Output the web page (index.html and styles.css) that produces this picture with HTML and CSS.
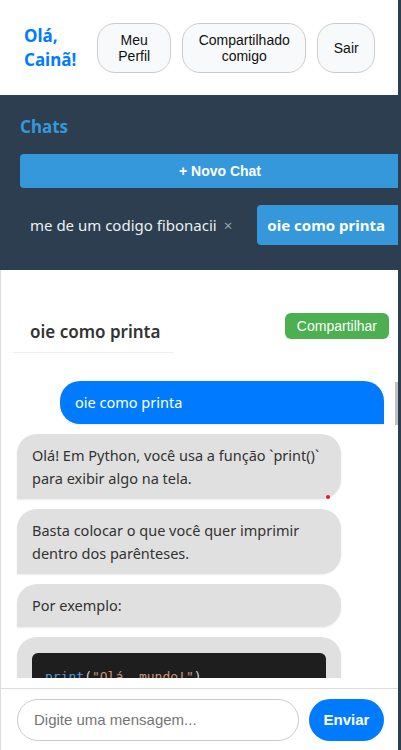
FILE: index.html
```html
<!DOCTYPE html>
<html lang="pt-BR">
<head>
<meta charset="utf-8">
<title>Chat</title>
<link rel="stylesheet" href="styles.css">
</head>
<body>
<div class="app">
  <header class="top-header">
    <h1 class="greeting">Olá,<br>Cainã!</h1>
    <nav class="top-nav">
      <button class="pill-btn pill-profile">Meu Perfil</button>
      <button class="pill-btn pill-shared">Compartilhado comigo</button>
      <button class="pill-btn pill-exit">Sair</button>
    </nav>
  </header>

  <aside class="sidebar">
    <h2 class="sidebar-title">Chats</h2>
    <button class="new-chat">+ Novo Chat</button>
    <div class="chat-tabs">
      <div class="chat-tab">me de um codigo fibonacii <span class="tab-close">×</span></div>
      <div class="chat-tab chat-tab-active">oie como printa</div>
    </div>
  </aside>

  <main class="chat">
    <div class="chat-header">
      <h3 class="chat-title">oie como printa</h3>
      <button class="share-btn">Compartilhar</button>
    </div>
    <div class="messages">
      <div class="bubble bubble-user">oie como printa</div>
      <div class="bubble bubble-bot">Olá! Em Python, você usa a função `print()` para exibir algo na tela.<span class="dot"></span></div>
      <div class="bubble bubble-bot">Basta colocar o que você quer imprimir dentro dos parênteses.</div>
      <div class="bubble bubble-bot">Por exemplo:</div>
      <div class="bubble bubble-bot bubble-code">
        <pre class="code"><span class="kw">print</span>(<span class="str">"Olá, mundo!"</span>)</pre>
      </div>
    </div>
    <div class="scroll-thumb"></div>
  </main>

  <footer class="composer">
    <input class="composer-input" type="text" placeholder="Digite uma mensagem...">
    <button class="send-btn">Enviar</button>
  </footer>
</div>
</body>
</html>
```

FILE: styles.css
```css
* { box-sizing: border-box; }

html, body {
  margin: 0;
  padding: 0;
  background: #2c3e50;
}

body {
  font-family: "Noto Sans", "Open Sans", sans-serif;
  color: #333;
}

.app {
  width: 398px;
  height: 750px;
  display: flex;
  flex-direction: column;
  overflow: hidden;
}

/* Header */
.top-header {
  height: 95px;
  flex: none;
  background: #fff;
  display: flex;
  align-items: center;
  padding: 0 0 0 24px;
}

.greeting {
  margin: 0 21px 0 0;
  font-size: 17px;
  line-height: 24px;
  font-weight: 700;
  color: #007bff;
}

.top-nav {
  display: flex;
  gap: 11px;
  align-items: center;
}

.pill-btn {
  height: 50px;
  border: 1px solid #ccc;
  border-radius: 18px;
  background: #f8f9fa;
  font-family: "Liberation Sans", Arial, sans-serif;
  font-size: 14px;
  line-height: 16px;
  color: #111;
  padding: 0 8px;
  text-align: center;
}

.pill-profile { width: 74px; }
.pill-shared { width: 124px; }
.pill-exit { width: 58px; }

/* Sidebar */
.sidebar {
  flex: none;
  height: 175px;
  background: #2c3e50;
  padding: 20px 0 0 20px;
  overflow: hidden;
}

.sidebar-title {
  margin: 0 0 15px;
  font-size: 17px;
  line-height: 24px;
  font-weight: 700;
  color: #3498db;
}

.new-chat {
  display: block;
  width: 400px;
  height: 34px;
  border: none;
  border-radius: 4px;
  background: #3498db;
  color: #fff;
  font-family: "Liberation Sans", Arial, sans-serif;
  font-weight: 700;
  font-size: 14px;
}

.chat-tabs {
  margin-top: 17px;
  display: flex;
  gap: 14px;
  white-space: nowrap;
}

.chat-tab {
  flex: none;
  height: 40px;
  display: flex;
  align-items: center;
  padding: 0 11px 0 10px;
  border-radius: 4px;
  color: #ecf0f1;
  font-size: 15px;
}

.tab-close {
  margin-left: 7px;
  color: #95a5a6;
  font-size: 15px;
}

.chat-tab-active {
  background: #3498db;
  color: #fff;
  font-weight: 700;
  padding-right: 20px;
}

/* Chat */
.chat {
  position: relative;
  flex: 1;
  min-height: 0;
  background: #fff;
  border-left: 1px solid #ddd;
  display: flex;
  flex-direction: column;
  padding-bottom: 10px;
}

.chat-header {
  flex: none;
  display: flex;
  justify-content: space-between;
  align-items: flex-start;
  padding: 39px 9px 0 12px;
}

.chat-title {
  margin: 0;
  padding: 10px 14px 8px 17px;
  border-bottom: 1px solid #eee;
  font-size: 17px;
  line-height: 25px;
  font-weight: 600;
  color: #333;
  white-space: nowrap;
}

.share-btn {
  margin-top: 4px;
  height: 26px;
  padding: 0 12px;
  border: none;
  border-radius: 6px;
  background: #4caf50;
  color: #fff;
  font-family: "Liberation Sans", Arial, sans-serif;
  font-size: 14px;
}

.messages {
  flex: 1;
  min-height: 0;
  overflow: hidden;
  display: flex;
  flex-direction: column;
  gap: 10px;
  padding: 28px 14px 0 16px;
}

.bubble {
  flex: none;
  position: relative;
  width: 324px;
  padding: 10px 15px;
  font-size: 14.5px;
  line-height: 22.5px;
  border-radius: 20px;
  box-shadow: 0 1px 2px rgba(0, 0, 0, 0.08);
}

.bubble-user {
  align-self: flex-end;
  background: #007bff;
  color: #fff;
  border-radius: 20px 20px 0 20px;
  line-height: 23px;
}

.bubble-bot {
  align-self: flex-start;
  background: #e0e0e0;
  color: #333;
  border-radius: 20px 20px 20px 0;
}

.dot {
  position: absolute;
  right: 11px;
  bottom: 0;
  width: 4px;
  height: 4px;
  border-radius: 50%;
  background: #e8191f;
}

.bubble-code {
  padding: 16px 15px 20px;
}

.code {
  margin: 0;
  background: #1e1e1e;
  border-radius: 6px;
  padding: 14px 13px;
  font-family: "DejaVu Sans Mono", "Liberation Mono", monospace;
  font-size: 13px;
  line-height: 20px;
  color: #d4d4d4;
}

.kw { color: #569cd6; }
.str { color: #ce9178; }

.scroll-thumb {
  position: absolute;
  right: 0;
  top: 112px;
  width: 3px;
  height: 43px;
  background: #c1c1c1;
}

/* Composer */
.composer {
  flex: none;
  height: 62px;
  background: #fff;
  border-top: 1px solid #ddd;
  border-left: 1px solid #ddd;
  display: flex;
  align-items: center;
  gap: 10px;
  padding: 0 14px 0 16px;
}

.composer-input {
  flex: 1;
  height: 42px;
  border: 1px solid #ccc;
  border-radius: 21px;
  padding: 0 16px;
  font-family: "Liberation Sans", Arial, sans-serif;
  font-size: 15px;
  color: #333;
  outline: none;
}

.composer-input::placeholder { color: #757575; }

.send-btn {
  width: 75px;
  height: 42px;
  border: none;
  border-radius: 21px;
  background: #007bff;
  color: #fff;
  font-family: "Liberation Sans", Arial, sans-serif;
  font-weight: 700;
  font-size: 15px;
}
```
